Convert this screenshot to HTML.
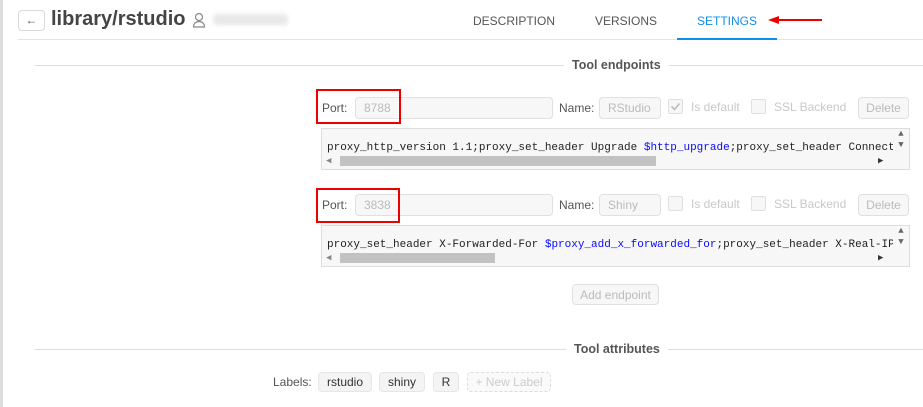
<!DOCTYPE html>
<html><head><style>
*{box-sizing:border-box;margin:0;padding:0}
body{width:923px;height:407px;background:#fff;font-family:"Liberation Sans",sans-serif;position:relative;overflow:hidden;font-size:12px;color:#555}
.a{position:absolute}
.inp{position:absolute;border:1px solid #e0e0e0;background:#f7f7f7;border-radius:4px;color:#bbb;font-size:12px;padding-left:8px;line-height:20px}
.lbl{position:absolute;color:#555;font-size:12px}
.cb{position:absolute;width:15px;height:15px;border:1px solid #e0e0e0;background:#f7f7f7;border-radius:2px}
.dis{position:absolute;color:#c8c8c8;font-size:12px}
.btn{position:absolute;border:1px solid #e0e0e0;background:#f7f7f7;border-radius:4px;color:#bbb;font-size:12px;text-align:center;line-height:20px}
.red{position:absolute;border:2px solid #e00;}
.code{position:absolute;border:1px solid #ddd;background:#f7f7f7;font-family:"Liberation Mono",monospace;font-size:11px;color:#222;overflow:hidden;white-space:nowrap}
.code .t{position:absolute;left:5px;top:13px}
.v{color:#0a0aff}
.sb{position:absolute;background:#c2c2c2;height:10px}
.tag{position:absolute;background:#f4f4f4;border:1px solid #e6e6e6;border-radius:4px;color:#333;font-size:12px;text-align:center;line-height:18px;height:20px}
</style></head><body>
<div class="a" style="left:0;top:0;width:3px;height:407px;background:#ddd"></div>
<div class="a" style="left:18px;top:10px;width:27px;height:21px;border:1px solid #d9d9d9;border-radius:4px;text-align:center;line-height:18px;color:#555;font-size:12px">&larr;</div>
<div class="a" style="left:51px;top:8px;font-size:20px;font-weight:bold;color:#444">library/rstudio</div>
<svg class="a" style="left:192px;top:12px" width="14" height="16" viewBox="0 0 14 16"><circle cx="7" cy="5" r="3.5" fill="none" stroke="#888" stroke-width="1.2"/><path d="M1.5 15c0-3.5 2.5-5.5 5.5-5.5s5.5 2 5.5 5.5z" fill="none" stroke="#888" stroke-width="1.2"/></svg>
<div class="a" style="left:213px;top:14px;width:75px;height:11px;background:#e8e8e8;border-radius:4px;filter:blur(2px)"></div>
<div class="a" style="left:18px;top:39px;width:905px;height:1px;background:#e3e3e3"></div>
<div class="a" style="left:473px;top:14px;font-size:12px;color:#555">DESCRIPTION</div>
<div class="a" style="left:595px;top:14px;font-size:12px;color:#555">VERSIONS</div>
<div class="a" style="left:697px;top:14px;font-size:12px;color:#108ee9">SETTINGS</div>
<div class="a" style="left:677px;top:38px;width:100px;height:2px;background:#108ee9"></div>
<svg class="a" style="left:768px;top:15px" width="56" height="10"><path d="M10 5H54" stroke="#e00" stroke-width="2"/><path d="M0 5L11 1V9z" fill="#e00"/></svg>

<div class="a" style="left:35px;top:65px;width:888px;height:1px;background:#ddd"></div>
<div class="a" style="left:564px;top:58px;background:#fff;padding:0 8px;font-weight:bold;color:#555;font-size:12.5px">Tool endpoints</div>

<div class="lbl" style="left:322px;top:101px">Port:</div>
<div class="inp" style="left:355px;top:97px;width:198px;height:22px">8788</div>
<div class="lbl" style="left:559px;top:101px">Name:</div>
<div class="inp" style="left:599px;top:97px;width:62px;height:22px">RStudio</div>
<div class="cb" style="left:668px;top:99px"><svg width="13" height="13" style="position:absolute;left:0;top:0"><path d="M2.5 6.5l3 3 5-6" fill="none" stroke="#bbb" stroke-width="1.6"/></svg></div>
<div class="dis" style="left:691px;top:100px">Is default</div>
<div class="cb" style="left:751px;top:99px"></div>
<div class="dis" style="left:774px;top:100px">SSL Backend</div>
<div class="btn" style="left:858px;top:97px;width:51px;height:22px">Delete</div>
<div class="red" style="left:316px;top:89px;width:85px;height:35px"></div>
<div class="code" style="left:321px;top:128px;width:589px;height:42px"><div class="t">proxy_http_version 1.1;proxy_set_header Upgrade <span class="v">$http_upgrade</span>;proxy_set_header Connect</div><div class="sb" style="left:18px;top:27px;width:316px"></div><div class="a" style="right:0;top:0;width:16px;height:28px;background:#f7f7f7;color:#666;font-size:9px;text-align:center;line-height:11px">▲<br>▼</div><div class="a" style="left:4px;top:27px;font-size:9px;color:#888">◀</div><div class="a" style="left:556px;top:27px;font-size:9px;color:#333">▶</div></div>

<div class="lbl" style="left:322px;top:198px">Port:</div>
<div class="inp" style="left:355px;top:194px;width:198px;height:22px">3838</div>
<div class="lbl" style="left:559px;top:198px">Name:</div>
<div class="inp" style="left:599px;top:194px;width:62px;height:22px">Shiny</div>
<div class="cb" style="left:668px;top:196px"></div>
<div class="dis" style="left:691px;top:197px">Is default</div>
<div class="cb" style="left:751px;top:196px"></div>
<div class="dis" style="left:774px;top:197px">SSL Backend</div>
<div class="btn" style="left:858px;top:194px;width:51px;height:22px">Delete</div>
<div class="red" style="left:316px;top:188px;width:84px;height:35px"></div>
<div class="code" style="left:321px;top:225px;width:589px;height:42px"><div class="t">proxy_set_header X-Forwarded-For <span class="v">$proxy_add_x_forwarded_for</span>;proxy_set_header X-Real-IP</div><div class="sb" style="left:18px;top:27px;width:155px"></div><div class="a" style="right:0;top:0;width:16px;height:28px;background:#f7f7f7;color:#666;font-size:9px;text-align:center;line-height:11px">▲<br>▼</div><div class="a" style="left:4px;top:27px;font-size:9px;color:#888">◀</div><div class="a" style="left:556px;top:27px;font-size:9px;color:#333">▶</div></div>

<div class="btn" style="left:572px;top:284px;width:87px;height:21px">Add endpoint</div>

<div class="a" style="left:35px;top:349px;width:888px;height:1px;background:#ddd"></div>
<div class="a" style="left:566px;top:342px;background:#fff;padding:0 8px;font-weight:bold;color:#555;font-size:12.5px">Tool attributes</div>
<div class="lbl" style="left:273px;top:375px">Labels:</div>
<div class="tag" style="left:318px;top:372px;width:54px">rstudio</div>
<div class="tag" style="left:379px;top:372px;width:46px">shiny</div>
<div class="tag" style="left:433px;top:372px;width:26px">R</div>
<div class="tag" style="left:467px;top:372px;width:84px;border:1px dashed #ddd;background:#fafafa;color:#ccc">+ New Label</div>
</body></html>
